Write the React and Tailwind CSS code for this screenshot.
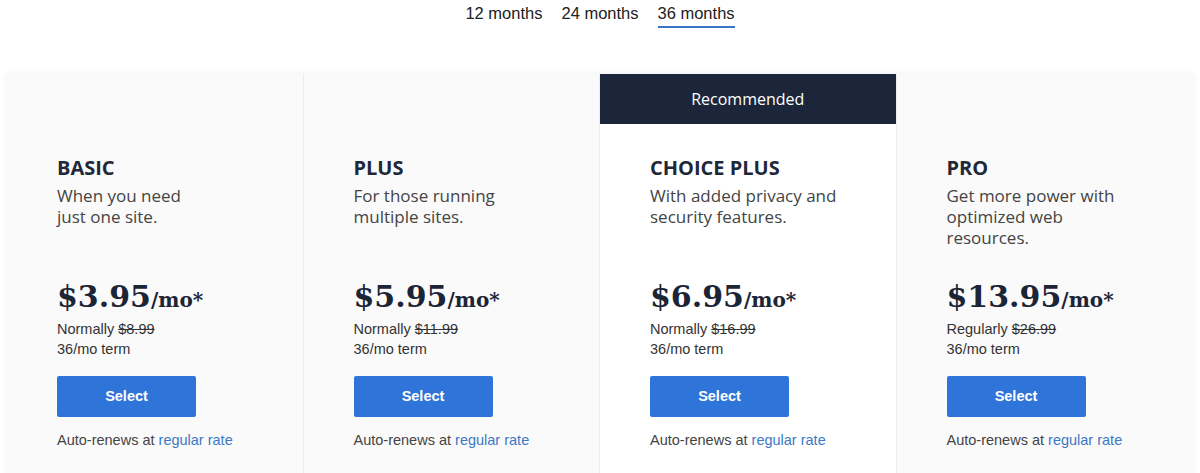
const plans = [
  {
    name: "BASIC",
    desc: ["When you need", "just one site."],
    price: "$3.95",
    label: "Normally",
    old: "$8.99",
  },
  {
    name: "PLUS",
    desc: ["For those running", "multiple sites."],
    price: "$5.95",
    label: "Normally",
    old: "$11.99",
  },
  {
    name: "CHOICE PLUS",
    desc: ["With added privacy and", "security features."],
    price: "$6.95",
    label: "Normally",
    old: "$16.99",
    recommended: true,
  },
  {
    name: "PRO",
    desc: ["Get more power with", "optimized web", "resources."],
    price: "$13.95",
    label: "Regularly",
    old: "$26.99",
  },
];

const PlanCard = ({ plan, last }) => {
  return (
    <div
      className={`flex flex-col ${plan.recommended ? "bg-white" : "bg-[#fafafa]"} ${
        last ? "" : "border-r border-[#ececec]"
      }`}
    >
      {/* header strip */}
      {plan.recommended ? (
        <div className="h-[50px] bg-[#1b263a] flex items-center justify-center text-white text-[16px] font-['Open_Sans',sans-serif]">
          Recommended
        </div>
      ) : (
        <div className="h-[50px]" />
      )}

      <div className="pl-[50px] pr-6 pt-[33px] font-['Open_Sans',sans-serif]">
        <h2 className="text-[20px] leading-[22px] font-bold text-[#1f2838]">
          {plan.name}
        </h2>
        <p className="mt-[6px] h-[63px] text-[17px] leading-[21px] text-[#444]">
          {plan.desc.map((line) => (
            <span key={line} className="block">
              {line}
            </span>
          ))}
        </p>

        {/* price */}
        <div className="mt-[26px] h-[40px] flex items-baseline font-['DejaVu_Serif',serif] font-bold text-[#1c2536]">
          <span className="text-[30px]">{plan.price}</span>
          <span className="text-[20px]">/mo*</span>
        </div>
        <div className="mt-[5px] text-[14.5px] leading-[20px] text-[#333] font-['Liberation_Sans',sans-serif]">
          {plan.label} <span className="line-through">{plan.old}</span>
        </div>
        <div className="text-[14.5px] leading-[20px] text-[#333] font-['Liberation_Sans',sans-serif]">
          36/mo term
        </div>

        <button className="mt-[17px] w-[139px] h-[41px] bg-[#2f74d8] text-white text-[14.5px] font-bold rounded-[2px] font-['Liberation_Sans',sans-serif]">
          Select
        </button>

        <div className="mt-[13px] text-[14.5px] leading-[20px] text-[#444] font-['Liberation_Sans',sans-serif]">
          Auto-renews at <span className="text-[#3c78c4]">regular rate</span>
        </div>
      </div>
    </div>
  );
};

const App = () => {
  return (
    <div className="w-[1200px] h-[473px] bg-white overflow-hidden">
      {/* term tabs */}
      <div className="h-[74px] flex justify-center gap-[19px] font-['Liberation_Sans',sans-serif] text-[16.5px] leading-[20px] text-[#222]">
        <div className="pt-[3px]">12 months</div>
        <div className="pt-[3px]">24 months</div>
        <div className="pt-[3px]">
          <div className="pb-[3px] border-b-2 border-[#3b77c9]">36 months</div>
        </div>
      </div>

      {/* cards */}
      <div className="mx-[7px] grid grid-cols-4 h-[420px] shadow-[0_0_6px_rgba(0,0,0,0.07)]">
        {plans.map((plan, index) => (
          <PlanCard key={plan.name} plan={plan} last={index === plans.length - 1} />
        ))}
      </div>
    </div>
  );
};

export default App;
